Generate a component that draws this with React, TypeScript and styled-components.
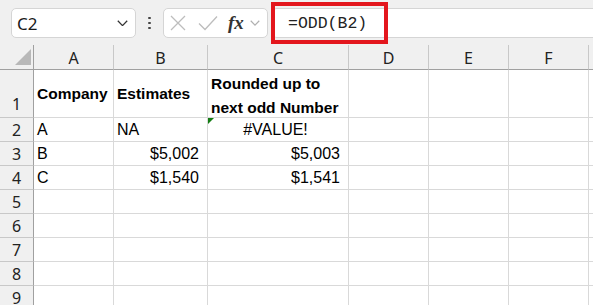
import React from 'react'
import styled, { createGlobalStyle } from 'styled-components'

const GlobalStyle = createGlobalStyle`
	html, body {
		margin: 0;
		padding: 0;
		background: #ffffff;
		overflow: hidden;
	}
`

const uiFont = `'Noto Sans', 'Open Sans', sans-serif`
const cellFont = `'Liberation Sans', Arial, sans-serif`

const Page = styled.div`
	width: 593px;
	height: 305px;
	position: relative;
	overflow: hidden;
	background: #ffffff;
`

const Toolbar = styled.div`
	height: 45px;
	box-sizing: border-box;
	background: #f0f0f0;
	display: flex;
	align-items: flex-start;
	padding: 8px 0 0 11px;
`

const Box = styled.div<{ $width?: number }>`
	height: 30px;
	box-sizing: border-box;
	background: #ffffff;
	border: 1px solid #d5d5d5;
	border-radius: 5px;
	display: flex;
	align-items: center;
	flex-shrink: 0;
	${(p) => (p.$width ? `width: ${p.$width}px;` : 'flex: 1 1 0;')}
`

const NameBox = styled(Box)`
	justify-content: space-between;
	padding: 0 7px 0 5px;
	font-family: ${uiFont};
	font-size: 17px;
	color: #1a1a1a;
`

const Dots = styled.div`
	width: 27px;
	height: 30px;
	flex-shrink: 0;
	display: flex;
	flex-direction: column;
	align-items: center;
	justify-content: center;
	gap: 2.5px;

	span {
		width: 2.5px;
		height: 2.5px;
		border-radius: 50%;
		background: #444;
	}
`

const FxBox = styled(Box)`
	padding: 0 0 0 6px;
	gap: 12px;
	margin-right: 4px;
`

const Fx = styled.span`
	font-family: 'Liberation Serif', 'DejaVu Serif', serif;
	font-style: italic;
	font-weight: bold;
	font-size: 19px;
	color: #333;
	margin-left: -2px;
	margin-right: -6px;
`

const FormulaInput = styled(Box)`
	border-right: none;
	border-radius: 5px 0 0 5px;
	padding-left: 15px;
	font-family: 'Liberation Mono', 'DejaVu Sans Mono', monospace;
	font-size: 16.5px;
	color: #222;
`

const Highlight = styled.div`
	position: absolute;
	left: 271px;
	top: 2px;
	width: 117px;
	height: 42px;
	box-sizing: border-box;
	border: 4px solid #e3161d;
	pointer-events: none;
`

const Grid = styled.div`
	display: grid;
	grid-template-columns: 34px 80px 94px 141px 80px 80px 80px 1fr;
	grid-template-rows: 25px 48px repeat(9, 24px);
`

const Cell = styled.div<{ $align?: 'left' | 'right' | 'center'; $bold?: boolean; $v?: 'center' | 'end' }>`
	position: relative;
	box-sizing: border-box;
	border-right: 1px solid #d9d9d9;
	border-bottom: 1px solid #d9d9d9;
	display: flex;
	align-items: ${(p) => (p.$v === 'end' ? 'flex-end' : 'center')};
	justify-content: ${(p) =>
		p.$align === 'right' ? 'flex-end' : p.$align === 'center' ? 'center' : 'flex-start'};
	padding: 0 8px 0 3px;
	font-family: ${cellFont};
	font-size: ${(p) => (p.$bold ? '15.5px' : '16px')};
	font-weight: ${(p) => (p.$bold ? 'bold' : 'normal')};
	color: #000;
	white-space: nowrap;
`

const WrapText = styled.div`
	line-height: 24px;
	white-space: normal;
	margin-bottom: -3px;
`

const ColHead = styled.div`
	box-sizing: border-box;
	background: #f0f0f0;
	border-right: 1px solid #c8c8c8;
	border-bottom: 1px solid #a0a0a0;
	display: flex;
	align-items: center;
	justify-content: center;
	font-family: ${uiFont};
	font-size: 16px;
	color: #222;
	padding-top: 1px;
`

const Corner = styled(ColHead)`
	border-right: 1px solid #a0a0a0;
	justify-content: flex-end;
	align-items: flex-end;
	padding: 0 2px 4px 0;
`

const RowHead = styled.div<{ $bottom?: boolean }>`
	box-sizing: border-box;
	background: #f0f0f0;
	border-right: 1px solid #a0a0a0;
	border-bottom: 1px solid #c8c8c8;
	display: flex;
	align-items: ${(p) => (p.$bottom ? 'flex-end' : 'center')};
	justify-content: center;
	padding-bottom: ${(p) => (p.$bottom ? '2px' : '0')};
	font-family: ${uiFont};
	font-size: 16px;
	color: #222;
`

const ErrorMark = styled.div`
	position: absolute;
	left: 0;
	top: 0;
	width: 0;
	height: 0;
	border-top: 6px solid #137c13;
	border-right: 6px solid transparent;
`

const Chevron: React.FC<{ color: string; size?: number }> = ({ color, size = 11 }) => (
	<svg width={size} height={size * 0.6} viewBox="0 0 11 6.6">
		<path d="M0.8 0.8 L5.5 5.6 L10.2 0.8" fill="none" stroke={color} strokeWidth="1.3" />
	</svg>
)

const columns = ['A', 'B', 'C', 'D', 'E', 'F', '']

type Row = {
	n: number
	cells: React.ReactNode[]
}

const rows: Row[] = [
	{ n: 2, cells: ['A', 'NA', '#VALUE!'] },
	{ n: 3, cells: ['B', '$5,002', '$5,003'] },
	{ n: 4, cells: ['C', '$1,540', '$1,541'] },
	{ n: 5, cells: [] },
	{ n: 6, cells: [] },
	{ n: 7, cells: [] },
	{ n: 8, cells: [] },
	{ n: 9, cells: [] },
]

const App: React.FC = () => {
	return (
		<Page>
			<GlobalStyle />
			<Toolbar>
				<NameBox $width={125}>
					<span>C2</span>
					<Chevron color="#333" />
				</NameBox>
				<Dots>
					<span />
					<span />
					<span />
				</Dots>
				<FxBox $width={105}>
					<svg width="16" height="16" viewBox="0 0 16 16">
						<path d="M1 1 L15 15 M15 1 L1 15" stroke="#bdbdbd" strokeWidth="1.3" fill="none" />
					</svg>
					<svg width="20" height="16" viewBox="0 0 20 16">
						<path d="M1 8.5 L7 14.5 L19 1.5" stroke="#bdbdbd" strokeWidth="1.3" fill="none" />
					</svg>
					<Fx>fx</Fx>
					<Chevron color="#b0b0b0" size={10} />
				</FxBox>
				<FormulaInput>=ODD(B2)</FormulaInput>
			</Toolbar>
			<Highlight />
			<Grid>
				<Corner>
					<svg width="16" height="16" viewBox="0 0 16 16">
						<path d="M16 0 L16 16 L0 16 Z" fill="#b8b8b8" />
					</svg>
				</Corner>
				{columns.map((c, i) => (
					<ColHead key={i}>{c}</ColHead>
				))}

				<RowHead $bottom>1</RowHead>
				<Cell $bold>Company</Cell>
				<Cell $bold>Estimates</Cell>
				<Cell $bold $v="end">
					<WrapText>
						Rounded up to
						<br />
						next odd Number
					</WrapText>
				</Cell>
				<Cell />
				<Cell />
				<Cell />
				<Cell />

				{rows.map((r) => (
					<React.Fragment key={r.n}>
						<RowHead>{r.n}</RowHead>
						<Cell>{r.cells[0]}</Cell>
						<Cell $align={r.n === 2 ? 'left' : 'right'}>{r.cells[1]}</Cell>
						<Cell $align={r.n === 2 ? 'center' : 'right'}>
							{r.n === 2 && <ErrorMark />}
							{r.cells[2]}
						</Cell>
						<Cell />
						<Cell />
						<Cell />
						<Cell />
					</React.Fragment>
				))}
			</Grid>
		</Page>
	)
}

export default App
